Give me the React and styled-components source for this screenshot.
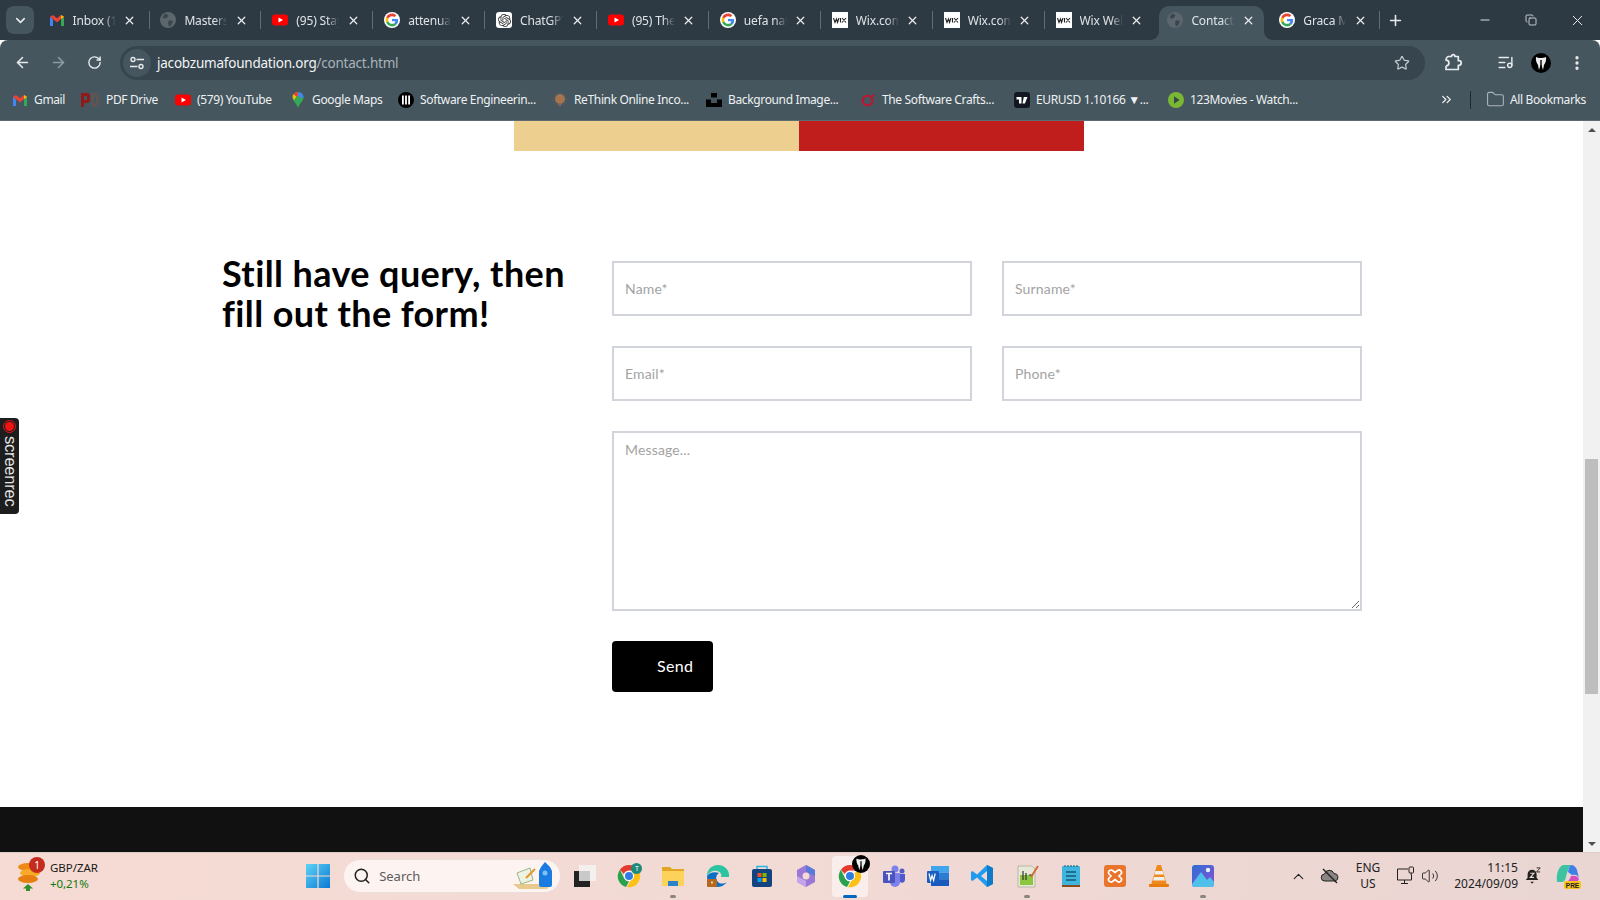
import styled, { createGlobalStyle } from "styled-components";
import {
  ArrowLeft,
  ArrowRight,
  ChevronDown,
  ChevronUp,
  ChevronsRight,
  Copy,
  EllipsisVertical,
  Folder,
  ListMusic,
  Minus,
  Plus,
  RotateCw,
  Search,
  Star,
  Volume2,
  X,
} from "lucide-react";
import { SiOpenai } from "react-icons/si";

const GlobalStyle = createGlobalStyle`
  html, body {
    margin: 0;
    padding: 0;
    height: 900px;
    overflow: hidden;
    background: #fff;
  }
  * { box-sizing: border-box; }
`;

const UI_FONT = `"Noto Sans", "Open Sans", sans-serif`;
const PAGE_FONT = `"Lato", "Liberation Sans", sans-serif`;

const Screen = styled.div`
  position: relative;
  width: 1600px;
  height: 900px;
  display: flex;
  flex-direction: column;
  overflow: hidden;
  font-family: ${UI_FONT};
`;

/* ---------- tab strip ---------- */
const TabStrip = styled.div`
  height: 40px;
  background: #2e3a43;
  display: flex;
  align-items: flex-end;
  padding-left: 6px;
  flex-shrink: 0;
`;
const TabSearch = styled.div`
  width: 28px;
  height: 28px;
  margin-bottom: 6px;
  margin-right: 4px;
  border-radius: 8px;
  background: #45565f;
  color: #e8eaed;
  display: flex;
  align-items: center;
  justify-content: center;
`;
const Tab = styled.div`
  position: relative;
  width: 111.9px;
  height: 40px;
  flex-shrink: 0;
  display: flex;
  align-items: center;
  padding: 0 0 0 10.5px;
  color: #dfe3e6;
  font-size: 12px;
  letter-spacing: -0.15px;
  &::before {
    content: "";
    display: ${(p) => (p.$active ? "block" : "none")};
    position: absolute;
    inset: 6px 5px 0 2px;
    background: #45565f;
    border-radius: 10px 10px 0 0;
  }
  &::after {
    content: "";
    display: ${(p) => (p.$active ? "block" : "none")};
    position: absolute;
    left: -6px;
    right: -3px;
    bottom: 0;
    height: 8px;
    background:
      radial-gradient(circle at 0 0, transparent 7.5px, #45565f 8px) left bottom / 8px 8px no-repeat,
      radial-gradient(circle at 100% 0, transparent 7.5px, #45565f 8px) right bottom / 8px 8px no-repeat;
  }
`;
const Favicon = styled.span`
  position: relative;
  z-index: 1;
  width: 16px;
  height: 16px;
  flex-shrink: 0;
  display: flex;
`;
const TabTitle = styled.span`
  position: relative;
  z-index: 1;
  width: 43px;
  margin-left: 8px;
  overflow: hidden;
  white-space: nowrap;
  -webkit-mask-image: linear-gradient(90deg, #000 72%, transparent);
  mask-image: linear-gradient(90deg, #000 72%, transparent);
`;
const TabClose = styled.span`
  position: relative;
  z-index: 1;
  width: 16px;
  height: 16px;
  margin-left: 6px;
  color: #e8eaed;
  display: flex;
  align-items: center;
  justify-content: center;
`;
const TabSep = styled.span`
  width: 1px;
  height: 18px;
  margin-left: 11px;
  background: #5d6c75;
`;
const NewTab = styled.div`
  width: 24px;
  height: 40px;
  margin-left: 3px;
  color: #e8eaed;
  display: flex;
  align-items: center;
  justify-content: center;
`;
const WindowControls = styled.div`
  margin-left: auto;
  display: flex;
  height: 40px;
  color: #e8eaed;
`;
const WindowButton = styled.div`
  width: 46px;
  display: flex;
  align-items: center;
  justify-content: center;
`;

/* ---------- toolbar ---------- */
const Toolbar = styled.div`
  height: 40px;
  background: #45565f;
  border-radius: 8px 8px 0 0;
  display: flex;
  align-items: center;
  padding: 5px 0 0 4px;
  flex-shrink: 0;
  color: #e8eaed;
`;
const NavButton = styled.div`
  width: ${(p) => p.$w || 36}px;
  height: 34px;
  flex-shrink: 0;
  display: flex;
  align-items: center;
  justify-content: center;
  color: ${(p) => (p.$dim ? "#8f9ba2" : "#e8eaed")};
`;
const Omnibox = styled.div`
  width: 1305px;
  height: 34px;
  margin-left: 8px;
  margin-right: 10px;
  border-radius: 17px;
  background: #37454e;
  display: flex;
  align-items: center;
  padding-left: 3px;
  flex-shrink: 0;
`;
const SiteInfo = styled.div`
  width: 28px;
  height: 28px;
  border-radius: 50%;
  background: #45565f;
  display: flex;
  align-items: center;
  justify-content: center;
`;
const Url = styled.div`
  margin-left: 6px;
  font-size: 13.5px;
  letter-spacing: -0.22px;
  color: #f1f3f4;
  & span { color: #a9b3b9; }
`;
const OmniStar = styled.div`
  margin-left: auto;
  margin-right: 15px;
  color: #c4cbcf;
  display: flex;
`;
const ToolbarSep = styled.span`
  width: 1px;
  height: 18px;
  margin: 0 8px 0 8px;
  background: #6b7a82;
`;
const Avatar = styled.span`
  width: 20px;
  height: 20px;
  margin-left: 8px;
  display: flex;
`;

/* ---------- bookmarks ---------- */
const BookmarksBar = styled.div`
  height: 41px;
  padding: 0 0 1px 12px;
  background: #45565f;
  border-bottom: 1px solid #5d6b73;
  display: flex;
  align-items: center;
  flex-shrink: 0;
  color: #eef1f2;
  font-size: 12px;
  letter-spacing: -0.36px;
`;
const Bookmark = styled.div`
  width: ${(p) => p.$w}px;
  flex-shrink: 0;
  display: flex;
  align-items: center;
  gap: ${(p) => p.$gap || 6}px;
  white-space: nowrap;
`;
const BookmarksEnd = styled.div`
  margin-left: auto;
  display: flex;
  align-items: center;
  padding-right: 14px;
`;
const BookmarkSep = styled.span`
  width: 1px;
  height: 18px;
  margin: 0 15px 0 16px;
  background: #20292f;
`;

/* ---------- page ---------- */
const PageArea = styled.div`
  flex: 1;
  display: flex;
  min-height: 0;
`;
const Viewport = styled.main`
  flex: 1;
  display: flex;
  flex-direction: column;
  background: #fff;
  font-family: ${PAGE_FONT};
`;
const ColorBands = styled.div`
  display: flex;
  justify-content: center;
  height: 30px;
  padding-left: 15px;
`;
const Band = styled.div`
  width: 285px;
  background: ${(p) => p.$color};
`;
const ContactSection = styled.section`
  display: flex;
  padding: 102px 0 0 222px;
`;
const Heading = styled.h2`
  width: 390px;
  flex-shrink: 0;
  margin: 0;
  font-size: 36px;
  line-height: 40px;
  font-weight: 700;
  letter-spacing: 0.4px;
  color: #000;
`;
const ContactForm = styled.form`
  width: 750px;
  margin-top: 8px;
  display: grid;
  grid-template-columns: 1fr 1fr;
  gap: 30px;
`;
const Field = styled.input`
  height: 55px;
  border: 2px solid #d1d5db;
  padding: 0 11px;
  font-family: ${PAGE_FONT};
  font-size: 14px;
  letter-spacing: 0.15px;
  outline: none;
  &::placeholder { color: #a3a3a3; opacity: 1; }
`;
const MessageBox = styled.textarea`
  grid-column: 1 / 3;
  height: 180px;
  border: 2px solid #d1d5db;
  padding: 8px 11px;
  font-family: ${PAGE_FONT};
  font-size: 14px;
  letter-spacing: 0.15px;
  outline: none;
  resize: vertical;
  display: block;
  &::placeholder { color: #a3a3a3; opacity: 1; }
`;
const SendButton = styled.button`
  grid-column: 1 / 3;
  justify-self: start;
  width: 101px;
  height: 51px;
  border: none;
  border-radius: 4px;
  background: #000;
  color: #fff;
  padding: 0 0 2px 45px;
  text-align: left;
  font-family: ${PAGE_FONT};
  font-size: 16px;
  font-weight: 400;
  letter-spacing: 0.3px;
`;
const Footer = styled.footer`
  margin-top: auto;
  height: 45px;
  background: #111;
`;
const Scrollbar = styled.div`
  width: 17px;
  background: #f1f1f1;
  display: flex;
  flex-direction: column;
  align-items: center;
`;
const ScrollArrow = styled.div`
  height: 17px;
  display: flex;
  align-items: center;
  justify-content: center;
  width: 0;
  &::before {
    content: "";
    border-left: 4px solid transparent;
    border-right: 4px solid transparent;
    border-${(p) => (p.$down ? "top" : "bottom")}: 4px solid #505050;
  }
`;
const ScrollThumb = styled.div`
  width: 13px;
  height: 235px;
  margin: 321px 0 auto;
  background: #bebebe;
`;
const ScreenRec = styled.div`
  position: absolute;
  left: 0;
  top: 418px;
  width: 19px;
  height: 96px;
  background: #1d1d1d;
  border-radius: 0 4px 4px 0;
  color: #e6e6e6;
  display: flex;
  flex-direction: column;
  align-items: center;
  padding-top: 3px;
  font-family: "Liberation Sans", sans-serif;
  font-size: 16.5px;
`;
const RecDot = styled.span`
  width: 9px;
  height: 9px;
  margin-top: 1px;
  border-radius: 50%;
  background: #f01414;
  outline: 1px solid #f01414;
  outline-offset: 1px;
  flex-shrink: 0;
`;
const RecLabel = styled.span`
  writing-mode: vertical-rl;
  margin-top: 5px;
  margin-left: 2px;
  line-height: 19px;
  letter-spacing: -0.2px;
`;

/* ---------- taskbar ---------- */
const Taskbar = styled.div`
  height: 48px;
  padding-bottom: 1px;
  flex-shrink: 0;
  display: flex;
  align-items: center;
  background: linear-gradient(90deg, #f5dbd3, #f2dad5 50%, #e9d5d2);
  border-top: 1px solid #dccdc9;
  color: #1a1a1a;
`;
const Widget = styled.div`
  width: 296px;
  flex-shrink: 0;
  display: flex;
  align-items: center;
  padding-left: 18px;
`;
const WidgetIcon = styled.div`
  position: relative;
  width: 32px;
  height: 34px;
`;
const Badge = styled.span`
  position: absolute;
  left: 11px;
  top: -2px;
  width: 16px;
  height: 16px;
  border-radius: 50%;
  background: #c42b1c;
  color: #fff;
  font-size: 10px;
  line-height: 16px;
  text-align: center;
`;
const WidgetText = styled.div`
  font-size: 11.5px;
  line-height: 16px;
  letter-spacing: -0.05px;
`;
const WidgetChange = styled.div`
  color: #0f7b0f;
`;
const TaskCell = styled.div`
  position: relative;
  width: 44.15px;
  height: 46px;
  flex-shrink: 0;
  display: flex;
  align-items: center;
  justify-content: center;
  &::before {
    content: "";
    display: ${(p) => (p.$active ? "block" : "none")};
    position: absolute;
    left: 4px;
    right: 4px;
    top: 3px;
    bottom: 2px;
    border-radius: 4px;
    background: rgba(255, 255, 255, 0.55);
  }
`;
const RunDot = styled.span`
  position: absolute;
  left: 50%;
  bottom: 1px;
  width: ${(p) => (p.$active ? 14 : 6)}px;
  height: 3px;
  margin-left: ${(p) => (p.$active ? -7 : -3)}px;
  border-radius: 2px;
  background: ${(p) => (p.$active ? "#0067c0" : "#8a8584")};
`;
const CellIcon = styled.span`
  position: relative;
  display: flex;
`;
const ChromeBadge = styled.span`
  position: absolute;
  right: -8px;
  top: -9px;
  width: 18px;
  height: 18px;
  display: flex;
`;
const ProfileDot = styled.span`
  position: absolute;
  right: -1px;
  top: -1px;
  width: 11px;
  height: 11px;
  border-radius: 50%;
  background: #1e8a7a;
  color: #fff;
  font-size: 7px;
  line-height: 11px;
  text-align: center;
`;
const SearchBox = styled.div`
  width: 218px;
  height: 34px;
  margin: 0 2px 0 3px;
  flex-shrink: 0;
  border-radius: 17px;
  background: #fdf3f0;
  border: 1px solid #ecdfdb;
  display: flex;
  align-items: center;
  padding-left: 9px;
  font-size: 13px;
  color: #5c5c5c;
  gap: 8px;
`;
const SearchArt = styled.span`
  margin-left: auto;
  margin-right: 5px;
  display: flex;
`;
const Tray = styled.div`
  margin-left: auto;
  padding-right: 8px;
  display: flex;
  align-items: center;
`;
const TrayItem = styled.div`
  width: ${(p) => p.$w}px;
  height: 46px;
  display: flex;
  flex-direction: column;
  align-items: center;
  justify-content: center;
  font-size: 12px;
  line-height: 16px;
  color: #222;
`;
const ClockItem = styled(TrayItem)`
  align-items: flex-end;
  padding-right: 4px;
  white-space: nowrap;
`;

/* ---------- icons ---------- */
const GmailIcon = () => (
  <svg viewBox="0 0 16 16" width="16" height="16">
    <path d="M1 4.5V14h3V7.5z" fill="#4285f4" />
    <path d="M15 4.5V14h-3V7.5z" fill="#34a853" />
    <path d="M1 4.8 4 3l4 3.2L12 3l3 1.8L8 10.2 4 7.3z" fill="#ea4335" />
    <path d="M12 3l3 1.8-3 2.5z" fill="#fbbc05" />
  </svg>
);
const GlobeIcon = () => (
  <svg viewBox="0 0 16 16" width="16" height="16">
    <circle cx="8" cy="8" r="8" fill="#5b666d" />
    <path d="M5 1.500 8.500 3 7 6 4 6.500 2.500 5zM9 8l4 1-1.500 4-2.500 1.500L8 11z" fill="#3b474f" />
  </svg>
);
const YoutubeIcon = () => (
  <svg viewBox="0 0 16 16" width="16" height="16">
    <rect x="0" y="2.500" width="16" height="11" rx="3" fill="#f00" />
    <path d="M6.500 5.500v5L11 8z" fill="#fff" />
  </svg>
);
const GoogleIcon = () => (
  <svg viewBox="-6 -6 60 60" width="16" height="16">
    <circle cx="24" cy="24" r="30" fill="#fff" />
    <path fill="#EA4335" d="M24 9.5c3.54 0 6.71 1.22 9.21 3.6l6.85-6.85C35.9 2.38 30.47 0 24 0 14.62 0 6.51 5.38 2.56 13.22l7.98 6.19C12.43 13.72 17.74 9.5 24 9.5z" />
    <path fill="#4285F4" d="M46.98 24.55c0-1.57-.15-3.09-.38-4.55H24v9.02h12.94c-.58 2.96-2.26 5.48-4.78 7.18l7.73 6c4.51-4.18 7.09-10.36 7.09-17.65z" />
    <path fill="#FBBC05" d="M10.53 28.59c-.48-1.45-.76-2.99-.76-4.59s.27-3.14.76-4.59l-7.98-6.19C.92 16.46 0 20.12 0 24c0 3.88.92 7.54 2.56 10.78l7.97-6.19z" />
    <path fill="#34A853" d="M24 48c6.48 0 11.93-2.13 15.89-5.81l-7.73-6c-2.15 1.45-4.92 2.3-8.16 2.3-6.26 0-11.57-4.22-13.47-9.91l-7.98 6.19C6.51 42.62 14.62 48 24 48z" />
  </svg>
);
const GptTile = styled.span`
  width: 16px;
  height: 16px;
  border-radius: 3px;
  background: #fff;
  color: #333;
  display: flex;
  align-items: center;
  justify-content: center;
`;
const GptIcon = () => (
  <GptTile>
    <SiOpenai size={13} />
  </GptTile>
);
const WixIcon = () => (
  <svg viewBox="0 0 16 16" width="16" height="16">
    <rect width="16" height="16" fill="#fff" />
    <path d="M1.500 6l1.500 4.500L4.500 7l1 3.500L7 6M8.500 6v4.500M10 6l4 4.500M14 6l-4 4.500" fill="none" stroke="#222" strokeWidth="1.100" />
  </svg>
);
const PdfIcon = () => (
  <svg viewBox="0 0 20 16" width="20" height="16">
    <path d="M1 1h7l2 2v6l-2 2H4v4H1z" fill="#8e1a1a" />
    <rect x="4" y="4" width="3" height="4" fill="#45565f" />
    <path d="M11 1h5l3 3v8l-3 3h-5z" fill="#5e5454" />
    <rect x="14" y="4.500" width="2" height="7" fill="#45565f" />
  </svg>
);
const MapsIcon = () => (
  <svg viewBox="0 0 16 16" width="16" height="16">
    <path d="M8 0a5.500 5.500 0 0 1 5.500 5.500c0 3.500-4 5.500-5.500 10.500C6.500 11 2.500 9 2.500 5.500A5.500 5.500 0 0 1 8 0z" fill="#34a853" />
    <path d="M8 0a5.500 5.500 0 0 1 5.500 5.500L10 6a2 2 0 0 0-2-2z" fill="#4285f4" />
    <path d="M3.500 2.300 6.500 4.500 4 8C2.800 6 2 3.800 3.500 2.300z" fill="#fbbc05" />
    <path d="M3.500 2.300A5.500 5.500 0 0 1 8 0v4a2 2 0 0 0-1.500.5z" fill="#ea4335" />
  </svg>
);
const StripesIcon = () => (
  <svg viewBox="0 0 16 16" width="16" height="16">
    <circle cx="8" cy="8" r="8" fill="#000" />
    <path d="M4 3.500h1.800v9H4zM7.100 3.500h1.800v9H7.100zM10.200 3.500H12v9h-1.800z" fill="#fff" />
  </svg>
);
const BulbIcon = () => (
  <svg viewBox="0 0 16 16" width="16" height="16">
    <circle cx="8" cy="7" r="5" fill="#a5744f" />
    <path d="M6 11.500h4L8 15z" fill="#8a6a55" />
    <circle cx="8" cy="7" r="6.500" fill="none" stroke="#5b6870" strokeDasharray="1 2" />
  </svg>
);
const UnsplashIcon = () => (
  <svg viewBox="0 0 16 16" width="16" height="16">
    <path d="M5 1h6v4.500H5zM0 7.500h5V11h6V7.500h5V15H0z" fill="#000" />
  </svg>
);
const RingIcon = () => (
  <svg viewBox="0 0 16 16" width="16" height="16">
    <circle cx="7.500" cy="8.500" r="4.800" fill="none" stroke="#c8102e" strokeWidth="2" />
    <circle cx="13.500" cy="3.500" r="1.200" fill="#c8102e" />
  </svg>
);
const TradingIcon = () => (
  <svg viewBox="0 0 16 16" width="16" height="16">
    <rect width="16" height="16" rx="3" fill="#131722" />
    <path d="M2.500 5h5v6.500H5V7.500H2.500zM9.800 5h3.700l-2.600 6.500H8.500z" fill="#fff" />
  </svg>
);
const PlayIcon = () => (
  <svg viewBox="0 0 16 16" width="16" height="16">
    <circle cx="8" cy="8" r="8" fill="#7ab733" />
    <path d="M6 4.200v7.600L11.500 8z" fill="#37454e" />
  </svg>
);
const ProfileIcon = ({ size = 20 }) => (
  <svg viewBox="0 0 20 20" width={size} height={size}>
    <circle cx="10" cy="10" r="10" fill="#000" />
    <path d="M5 4c2 1 3.500 1 5 1s3-.2 5-1c.5 3-.5 6-2 8l-1 5-1.500-5h-1L8 17l-1-5C5.500 10 4.500 7 5 4z" fill="#eee" />
    <path d="M9.300 7h1.400v6H9.300z" fill="#000" />
  </svg>
);
const ExtensionIcon = () => (
  <svg viewBox="0 0 20 20" width="20" height="20" fill="none" stroke="#e8eaed" strokeWidth="1.700" strokeLinejoin="round">
    <path d="M3 5.500 5 3.500h3.500v-.2a1.700 1.700 0 0 1 3.400 0v.2h3.400v4.200h.6a2 2 0 0 1 0 4.600h-.6v4.200H3v-3.600" />
    <path d="M3 12.900a2.900 2.900 0 0 0 0-5.800V5.500" />
  </svg>
);
const SiteTuneIcon = () => (
  <svg viewBox="0 0 16 16" width="16" height="16" fill="none" stroke="#e8eaed" strokeWidth="1.400">
    <circle cx="4" cy="4.500" r="2" />
    <path d="M7.500 4.500H15M1 11.500h7.500" />
    <circle cx="12" cy="11.500" r="2" />
  </svg>
);
const WinLogo = () => (
  <svg viewBox="0 0 24 24" width="24" height="24">
    <defs>
      <linearGradient id="win" x1="0" y1="0" x2="1" y2="1">
        <stop offset="0" stopColor="#5ed3f5" />
        <stop offset="1" stopColor="#0a78d4" />
      </linearGradient>
    </defs>
    <path d="M0 0h11.400v11.400H0zM12.600 0H24v11.400H12.600zM0 12.600h11.400V24H0zM12.600 12.600H24V24H12.600z" fill="url(#win)" />
  </svg>
);
const TaskViewIcon = () => (
  <svg viewBox="0 0 24 24" width="24" height="24">
    <rect x="1" y="7" width="16" height="16" fill="#222" />
    <rect x="6" y="1" width="17" height="16" rx="1" fill="#f4f0ee" />
    <rect x="6" y="7" width="11" height="10" fill="#c9c9c9" />
  </svg>
);
const ChromeIcon = ({ size = 24 }) => (
  <svg viewBox="0 0 24 24" width={size} height={size}>
    <path d="M12 1a11 11 0 0 1 9.500 5.500H12A5.500 5.500 0 0 0 6.800 10L2.900 5.800A11 11 0 0 1 12 1z" fill="#e33b2e" />
    <path d="M2.900 5.800 7.300 14.800A5.500 5.500 0 0 0 12 17.500L9 23A11 11 0 0 1 2.900 5.800z" fill="#2aa14b" />
    <path d="M21.500 6.500A11 11 0 0 1 10 23l4.700-8A5.500 5.500 0 0 0 16.500 9z" fill="#fbc116" />
    <circle cx="12" cy="12" r="5" fill="#fff" />
    <circle cx="12" cy="12" r="4" fill="#2f7de1" />
  </svg>
);
const FolderIcon = () => (
  <svg viewBox="0 0 24 24" width="24" height="24">
    <path d="M1 3h8l2 2h12v4H1z" fill="#e3a526" />
    <path d="M1 7h22v15H1z" fill="#fcd25a" />
    <rect x="7" y="17" width="10" height="5" fill="#2a83c8" />
  </svg>
);
const EdgeIcon = () => (
  <svg viewBox="0 0 24 24" width="24" height="24">
    <path d="M12 1C5 1 1 6 1 12c2-4 6-6 10-5 4 1 5 4 4 6h8c1-6-4-12-11-12z" fill="#2cc4a0" />
    <path d="M1 12c0 6 4 11 10 11 4 0 8-2 10-5-3 2-7 2-9 0-3-3-2-7 1-9-5-2-10 0-12 3z" fill="#0c6fc6" />
    <rect x="1" y="15" width="10" height="8" rx="1" fill="#b4681f" />
    <rect x="5" y="17.500" width="2" height="2" fill="#f3d08d" />
  </svg>
);
const StoreIcon = () => (
  <svg viewBox="0 0 24 24" width="24" height="24">
    <path d="M7 5V2.500h10V5" fill="none" stroke="#2ab5e6" strokeWidth="1.500" />
    <rect x="2" y="5" width="20" height="18" rx="2" fill="#14447f" />
    <rect x="7.500" y="9" width="4" height="4" fill="#f25022" />
    <rect x="12.500" y="9" width="4" height="4" fill="#7fba00" />
    <rect x="7.500" y="14" width="4" height="4" fill="#00a4ef" />
    <rect x="12.500" y="14" width="4" height="4" fill="#ffb900" />
  </svg>
);
const M365Icon = () => (
  <svg viewBox="0 0 24 24" width="24" height="24">
    <path d="M12 1 21 6v12l-9 5-9-5V6z" fill="#9a78d6" />
    <path d="M12 1 21 6v6l-9-4z" fill="#5a7ad9" />
    <path d="M3 12v6l9 5v-6z" fill="#c4a4ea" />
    <circle cx="12" cy="12" r="3.500" fill="#f2dad5" />
  </svg>
);
const TeamsIcon = () => (
  <svg viewBox="0 0 24 24" width="24" height="24">
    <circle cx="13" cy="5" r="3.500" fill="#7b83eb" />
    <circle cx="20" cy="7" r="2.500" fill="#5059c9" />
    <path d="M8 9h10v9a5 5 0 0 1-10 0z" fill="#7b83eb" />
    <path d="M18 10h5v6a3 3 0 0 1-5 2z" fill="#5059c9" />
    <rect x="1" y="7" width="12" height="12" rx="1" fill="#4b53bc" />
    <path d="M4 9.500h6M7 9.500v7" stroke="#fff" strokeWidth="1.600" />
  </svg>
);
const WordIcon = () => (
  <svg viewBox="0 0 24 24" width="24" height="24">
    <rect x="5" y="2" width="18" height="6.700" fill="#41a5ee" />
    <rect x="5" y="8.700" width="18" height="6.700" fill="#2b7cd3" />
    <rect x="5" y="15.300" width="18" height="6.700" fill="#185abd" />
    <rect x="1" y="7" width="12" height="12" rx="1" fill="#1a5fbf" />
    <path d="M3 9.500l1.600 7 1.500-5 1.500 5 1.600-7" fill="none" stroke="#fff" strokeWidth="1.200" />
  </svg>
);
const VscodeIcon = () => (
  <svg viewBox="0 0 24 24" width="24" height="24">
    <path d="M17 1 23 4v16l-6 3-10-9.500L2.500 17 1 16V8l1.500-1L7 10.500zM17 7l-6 5 6 5z" fill="#1f9cf0" />
    <path d="M17 1l6 3v16l-6 3z" fill="#0f7cc9" />
  </svg>
);
const NotepadPlusIcon = () => (
  <svg viewBox="0 0 24 24" width="24" height="24">
    <path d="M3 2h14l3 3v18H3z" fill="#e7e7d8" stroke="#9a9a8c" strokeWidth="0.600" />
    <rect x="5" y="11" width="13" height="10" fill="#8cc63f" />
    <path d="M8 7v9M11 9v7M14 11h3" stroke="#333" strokeWidth="1.200" />
    <path d="M16 13 23 2" stroke="#d3662c" strokeWidth="1.800" />
  </svg>
);
const NotepadIcon = () => (
  <svg viewBox="0 0 24 24" width="24" height="24">
    <rect x="3" y="2" width="18" height="20" rx="1" fill="#3fb4dc" />
    <rect x="3" y="21" width="18" height="2" fill="#8a4b17" />
    <path d="M7 8h10M7 12h10M7 16h10" stroke="#14587a" strokeWidth="1.600" />
    <path d="M6 1v2M9 1v2M12 1v2M15 1v2M18 1v2" stroke="#14587a" />
  </svg>
);
const XamppIcon = () => (
  <svg viewBox="0 0 24 24" width="24" height="24">
    <rect x="1" y="1" width="22" height="22" rx="3" fill="#e8752b" />
    <path d="M8 6a2.500 2.500 0 0 0-2 4l2 2-2 2a2.500 2.500 0 0 0 3.500 3.500l2.500-2 2.500 2a2.500 2.500 0 0 0 3.500-3.500l-2-2 2-2A2.500 2.500 0 0 0 14.500 6.500L12 8.500 9.500 6.500A2.500 2.500 0 0 0 8 6z" fill="none" stroke="#fff" strokeWidth="1.700" />
  </svg>
);
const VlcIcon = () => (
  <svg viewBox="0 0 24 24" width="24" height="24">
    <path d="M10 1h4l6 20H4z" fill="#f08a1d" />
    <path d="M8.500 7h7l1 3.500h-9zM7 13h10l1 3.500H6z" fill="#f2f0ec" />
    <rect x="2" y="20" width="20" height="3" rx="1" fill="#e87d0d" />
  </svg>
);
const PhotosIcon = () => (
  <svg viewBox="0 0 24 24" width="24" height="24">
    <defs>
      <linearGradient id="ph" x1="0" y1="0" x2="1" y2="1">
        <stop offset="0" stopColor="#2c6fd6" />
        <stop offset="1" stopColor="#8b4fd0" />
      </linearGradient>
    </defs>
    <rect x="1" y="1" width="22" height="22" rx="3" fill="url(#ph)" />
    <circle cx="17" cy="6" r="2.200" fill="#e8f2fc" />
    <path d="M1 20 10 8l6 8 3-3 4 5v2a3 3 0 0 1-3 3H4a3 3 0 0 1-3-3z" fill="#4fc0ea" />
  </svg>
);
const CoinsIcon = () => (
  <svg viewBox="0 0 24 34" width="24" height="34">
    <ellipse cx="10" cy="8" rx="10" ry="4" fill="#ee8a15" />
    <ellipse cx="12" cy="14" rx="10" ry="4" fill="#f7a928" />
    <ellipse cx="10" cy="20" rx="10" ry="4" fill="#e77e10" />
    <path d="M10 25l5 4.500h-3V32H8v-2.500H5z" fill="#2f8f2f" />
  </svg>
);
const SearchArtIcon = () => (
  <svg viewBox="0 0 44 28" width="44" height="28">
    <path d="M2 22h38l-4 5H8z" fill="#e8c98e" />
    <path d="M6 11l13-5 3 12-12 4z" fill="#eef2e2" stroke="#7da86a" strokeWidth="0.800" />
    <path d="M15 16 24 7" stroke="#e5962b" strokeWidth="2" />
    <path d="M34 0l5 5 2 4v14a2 2 0 0 1-2 2h-9a2 2 0 0 1-2-2V9l2-4z" fill="#1a7be0" />
    <circle cx="34" cy="11" r="2.500" fill="#7cc2f4" />
  </svg>
);
const NetworkIcon = () => (
  <svg viewBox="0 0 20 20" width="20" height="20" fill="none" stroke="#222" strokeWidth="1">
    <path d="M12 3H1.500v11h14v-5M8.500 14v3M5 17.500h7" />
    <rect x="13" y="1" width="4.500" height="6" rx="1" />
    <path d="M15.200 7v2" />
  </svg>
);
const CloudSlashIcon = () => (
  <svg viewBox="0 0 20 20" width="20" height="20">
    <path d="M5 15a3.500 3.500 0 0 1-.500-7 5 5 0 0 1 9.500-.500A3.800 3.800 0 0 1 15 15z" fill="#8a8583" stroke="#222" strokeWidth="1" />
    <path d="M3 3l14 14" stroke="#222" strokeWidth="1.400" />
  </svg>
);
const BellZIcon = () => (
  <svg viewBox="0 0 20 20" width="18" height="18">
    <path d="M9 3a5 5 0 0 1 5 5v4l2 2.500H2L4 12V8a5 5 0 0 1 5-5z" fill="#222" />
    <path d="M7 16.500h4L9 18.500z" fill="#222" />
    <path d="M7 7h4l-4 4.500h4" fill="none" stroke="#f2dad5" strokeWidth="1.200" />
    <path d="M14 1h4l-4 4.500h4" fill="none" stroke="#222" strokeWidth="1" />
  </svg>
);
const CopilotIcon = () => (
  <svg viewBox="0 0 26 26" width="26" height="26">
    <path d="M8 2h8c-3 3-4 8-5 12-.5 3-2 5-5 5H2c-1-7 1-15 6-17z" fill="#3cc4a0" />
    <path d="M16 2c3 0 5 2 6 5l2 8c-1-3-4-4-7-3L13 9c.5-3 1-5 3-7z" fill="#3f7fe8" />
    <path d="M10 19c3 0 5-3 6-6 3-1 7 0 8 3-1 3-4 5-7 5h-7z" fill="#d34fbf" />
    <rect x="9" y="18" width="17" height="8" rx="2" fill="#f6c21c" />
    <text x="17.500" y="24.500" fontSize="6.500" fontWeight="700" textAnchor="middle" fontFamily="Liberation Sans, sans-serif" fill="#222">PRE</text>
  </svg>
);

/* ---------- data ---------- */
const tabs = [
  { title: "Inbox (1", icon: GmailIcon },
  { title: "Masters", icon: GlobeIcon },
  { title: "(95) Stay", icon: YoutubeIcon },
  { title: "attenuate", icon: GoogleIcon },
  { title: "ChatGPT", icon: GptIcon },
  { title: "(95) The", icon: YoutubeIcon },
  { title: "uefa nati", icon: GoogleIcon },
  { title: "Wix.com", icon: WixIcon },
  { title: "Wix.com", icon: WixIcon },
  { title: "Wix Web", icon: WixIcon, noSep: true },
  { title: "Contact", icon: GlobeIcon, active: true, noSep: true },
  { title: "Graca M", icon: GoogleIcon },
];

const bookmarks = [
  { label: "Gmail", icon: GmailIcon, w: 68 },
  { label: "PDF Drive", icon: PdfIcon, w: 95 },
  { label: "(579) YouTube", icon: YoutubeIcon, w: 115 },
  { label: "Google Maps", icon: MapsIcon, w: 108 },
  { label: "Software Engineerin...", icon: StripesIcon, w: 154 },
  { label: "ReThink Online Inco...", icon: BulbIcon, w: 154 },
  { label: "Background Image...", icon: UnsplashIcon, w: 154 },
  { label: "The Software Crafts...", icon: RingIcon, w: 154 },
  { label: "EURUSD 1.10166 ▼...", icon: TradingIcon, w: 154 },
  { label: "123Movies - Watch...", icon: PlayIcon, w: 154 },
];

const taskApps = [
  { icon: TaskViewIcon },
  { icon: ChromeIcon, profile: true },
  { icon: FolderIcon, running: true },
  { icon: EdgeIcon },
  { icon: StoreIcon },
  { icon: M365Icon },
  { icon: ChromeIcon, active: true },
  { icon: TeamsIcon },
  { icon: WordIcon },
  { icon: VscodeIcon },
  { icon: NotepadPlusIcon, running: true },
  { icon: NotepadIcon },
  { icon: XamppIcon },
  { icon: VlcIcon },
  { icon: PhotosIcon, running: true },
];

function App() {
  return (
    <Screen>
      <GlobalStyle />
      <TabStrip>
        <TabSearch>
          <ChevronDown size={15} strokeWidth={2.5} />
        </TabSearch>
        {tabs.map((tab, i) => (
          <Tab key={i} $active={tab.active}>
            <Favicon>
              <tab.icon />
            </Favicon>
            <TabTitle>{tab.title}</TabTitle>
            <TabClose>
              <X size={13} strokeWidth={2.4} />
            </TabClose>
            {!tab.noSep && <TabSep />}
          </Tab>
        ))}
        <NewTab>
          <Plus size={17} strokeWidth={2.2} />
        </NewTab>
        <WindowControls>
          <WindowButton>
            <Minus size={14} strokeWidth={1.6} />
          </WindowButton>
          <WindowButton>
            <Copy size={12} strokeWidth={1.6} />
          </WindowButton>
          <WindowButton>
            <X size={17} strokeWidth={1.4} />
          </WindowButton>
        </WindowControls>
      </TabStrip>

      <Toolbar>
        <NavButton>
          <ArrowLeft size={17} strokeWidth={2.2} />
        </NavButton>
        <NavButton $dim>
          <ArrowRight size={17} strokeWidth={2.2} />
        </NavButton>
        <NavButton>
          <RotateCw size={15} strokeWidth={2.2} />
        </NavButton>
        <Omnibox>
          <SiteInfo>
            <SiteTuneIcon />
          </SiteInfo>
          <Url>
            jacobzumafoundation.org<span>/contact.html</span>
          </Url>
          <OmniStar>
            <Star size={16} strokeWidth={1.8} />
          </OmniStar>
        </Omnibox>
        <NavButton>
          <ExtensionIcon />
        </NavButton>
        <ToolbarSep />
        <NavButton>
          <ListMusic size={17} strokeWidth={2} />
        </NavButton>
        <Avatar>
          <ProfileIcon />
        </Avatar>
        <NavButton $w={52}>
          <EllipsisVertical size={18} strokeWidth={2.4} />
        </NavButton>
      </Toolbar>

      <BookmarksBar>
        {bookmarks.map((b) => (
          <Bookmark key={b.label} $w={b.w}>
            <b.icon />
            {b.label}
          </Bookmark>
        ))}
        <BookmarksEnd>
          <ChevronsRight size={15} strokeWidth={2} />
          <BookmarkSep />
          <Bookmark $w={100} $gap={5}>
            <Folder size={19} strokeWidth={1.4} color="#aab4ba" />
            All Bookmarks
          </Bookmark>
        </BookmarksEnd>
      </BookmarksBar>

      <PageArea>
        <Viewport>
          <ColorBands>
            <Band $color="#edd08f" />
            <Band $color="#c01e1c" />
          </ColorBands>
          <ContactSection>
            <Heading>
              Still have query, then
              <br />
              fill out the form!
            </Heading>
            <ContactForm onSubmit={(e) => e.preventDefault()}>
              <Field placeholder="Name*" />
              <Field placeholder="Surname*" />
              <Field placeholder="Email*" />
              <Field placeholder="Phone*" />
              <MessageBox placeholder="Message..." />
              <SendButton type="submit">Send</SendButton>
            </ContactForm>
          </ContactSection>
          <Footer />
        </Viewport>
        <Scrollbar>
          <ScrollArrow />
          <ScrollThumb />
          <ScrollArrow $down />
        </Scrollbar>
      </PageArea>

      <Taskbar>
        <Widget>
          <WidgetIcon>
            <CoinsIcon />
            <Badge>1</Badge>
          </WidgetIcon>
          <WidgetText>
            GBP/ZAR
            <WidgetChange>+0,21%</WidgetChange>
          </WidgetText>
        </Widget>
        <TaskCell>
          <WinLogo />
        </TaskCell>
        <SearchBox>
          <Search size={18} strokeWidth={2} color="#222" />
          Search
          <SearchArt>
            <SearchArtIcon />
          </SearchArt>
        </SearchBox>
        {taskApps.map((app, i) => (
          <TaskCell key={i} $active={app.active}>
            <CellIcon>
              <app.icon />
              {app.active && (
                <ChromeBadge>
                  <ProfileIcon size={18} />
                </ChromeBadge>
              )}
              {app.profile && <ProfileDot>T</ProfileDot>}
            </CellIcon>
            {(app.running || app.active) && <RunDot $active={app.active} />}
          </TaskCell>
        ))}
        <Tray>
          <TrayItem $w={32}>
            <ChevronUp size={17} strokeWidth={1.6} />
          </TrayItem>
          <TrayItem $w={32}>
            <CloudSlashIcon />
          </TrayItem>
          <TrayItem $w={44}>
            <span>ENG</span>
            <span>US</span>
          </TrayItem>
          <TrayItem $w={32}>
            <NetworkIcon />
          </TrayItem>
          <TrayItem $w={16}>
            <Volume2 size={18} strokeWidth={1.2} />
          </TrayItem>
          <ClockItem $w={84}>
            <span>11:15</span>
            <span>2024/09/09</span>
          </ClockItem>
          <TrayItem $w={22}>
            <BellZIcon />
          </TrayItem>
          <TrayItem $w={48}>
            <CopilotIcon />
          </TrayItem>
        </Tray>
      </Taskbar>

      <ScreenRec>
        <RecDot />
        <RecLabel>screenrec</RecLabel>
      </ScreenRec>
    </Screen>
  );
}

export default App;
